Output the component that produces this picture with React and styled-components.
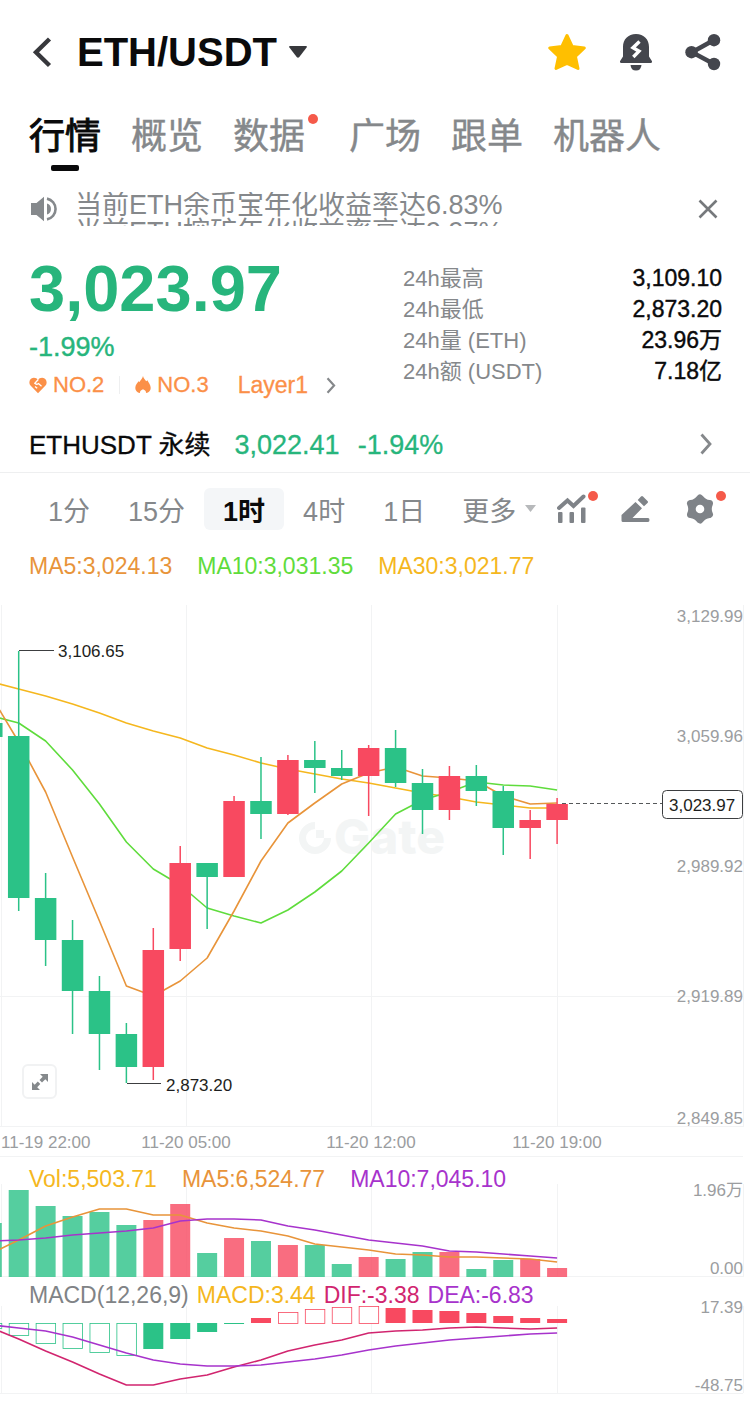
import React from "react";
import styled, { createGlobalStyle, css } from "styled-components";

const UP = "#2bc287";
const DOWN = "#f84960";
const ORANGE = "#e8943a";
const YELLOW = "#f5b71e";
const LIME = "#5fdc3c";
const PURPLE = "#a733cc";
const PINK = "#d1256f";

const tabs = [
  { name: "行情", active: true },
  { name: "概览" },
  { name: "数据", dot: true },
  { name: "广场" },
  { name: "跟单" },
  { name: "机器人" },
];

const stats = [
  ["24h最高", "3,109.10"],
  ["24h最低", "2,873.20"],
  ["24h量 (ETH)", "23.96万"],
  ["24h额 (USDT)", "7.18亿"],
];

const intervals = ["1分", "15分", "1时", "4时", "1日"];

// [rising, wick top, body top, body bottom, wick bottom]
const candles = [
  [0, 723, 723, 737, 737],
  [0, 651, 736, 898, 911],
  [0, 873, 898, 940, 966],
  [0, 920, 940, 991, 1034],
  [0, 976, 991, 1034, 1070],
  [0, 1023, 1034, 1067, 1083],
  [1, 928, 950, 1067, 1080],
  [1, 846, 863, 949, 961],
  [0, 863, 863, 877, 929],
  [1, 796, 801, 877, 877],
  [0, 757, 801, 814, 839],
  [1, 755, 760, 814, 815],
  [0, 741, 760, 768, 793],
  [0, 750, 768, 776, 780],
  [1, 745, 748, 776, 816],
  [0, 730, 748, 783, 787],
  [0, 769, 783, 810, 834],
  [1, 766, 776, 810, 820],
  [0, 765, 776, 791, 806],
  [0, 786, 791, 828, 855],
  [1, 810, 820, 828, 859],
  [1, 798, 804, 820, 844],
];

const ma30 = [682, 689, 696, 704, 713, 723, 731, 738, 748, 755, 763, 769, 774, 779, 783, 788, 793, 797, 802, 805, 808, 808];
const ma10 = [716, 723, 741, 770, 804, 842, 869, 885, 908, 916, 923, 910, 892, 871, 843, 814, 800, 792, 782, 785, 786, 790];
const ma5 = [697, 742, 792, 857, 921, 986, 996, 981, 958, 911, 861, 823, 803, 784, 773, 767, 776, 778, 781, 796, 804, 803];

const volumes = [1223, 1190, 1206, 1216, 1212, 1225, 1220, 1204, 1253, 1238, 1241, 1245, 1245, 1264, 1257, 1259, 1252, 1252, 1269, 1260, 1259, 1268];
const volMa5 = [1253, 1240, 1226, 1217, 1209, 1209, 1215, 1215, 1223, 1228, 1231, 1236, 1244, 1247, 1250, 1254, 1255, 1257, 1257, 1258, 1259, 1262];
const volMa10 = [1241, 1240, 1238, 1235, 1233, 1231, 1228, 1221, 1219, 1219, 1220, 1226, 1230, 1235, 1240, 1243, 1246, 1251, 1252, 1254, 1256, 1258];

// far end of every histogram bar, measured from the zero line
const ZERO = 1323;
const histogram = [1328, 1335, 1343, 1348, 1352, 1355, 1349, 1339, 1332, 1324, 1318, 1312, 1309, 1307, 1306, 1308, 1310, 1311, 1313, 1316, 1318, 1319];
const hollow = [0, 1, 2, 3, 4, 5, 11, 12, 13, 14];
const dif = [1328, 1339, 1351, 1362, 1374, 1385, 1385, 1379, 1375, 1367, 1360, 1351, 1345, 1340, 1333, 1331, 1330, 1328, 1327, 1328, 1329, 1328];
const dea = [1325, 1328, 1331, 1337, 1345, 1353, 1360, 1364, 1366, 1366, 1365, 1362, 1359, 1355, 1350, 1346, 1343, 1340, 1338, 1336, 1334, 1333];

const STEP = 26.92;
const xAt = (i) => 18.7 + (i - 1) * STEP;
const toPoints = (ys) => ys.map((y, i) => `${xAt(i)},${y}`).join(" ");
const gridX = [1, 186, 371, 557, 743];

const App = () => {
  return (
    <Page>
      <GlobalStyle />
      <Header />
      <Tabs>
        {tabs.map(({ name, active, dot }) => (
          <Tab key={name} $active={active} $dot={dot}>
            {name}
          </Tab>
        ))}
      </Tabs>
      <Notice />
      <Summary />
      <PerpetualLink href="#perpetual">
        <span>ETHUSDT 永续</span>
        <PerpetualPrice>3,022.41</PerpetualPrice>
        <PerpetualRate>-1.94%</PerpetualRate>
        <ChevronRight width="12" height="22" />
      </PerpetualLink>
      <Toolbar />
      <PriceChart />
      <VolumeChart />
      <MacdChart />
    </Page>
  );
};

export default App;

const Header = () => (
  <HeaderBar>
    <IconButton aria-label="返回">
      <svg width="20" height="32" viewBox="0 0 20 32" fill="none" stroke="#37383c" strokeWidth="4.4">
        <path d="M17.5 3 4 16.300 17.500 29.500" />
      </svg>
    </IconButton>
    <PairButton>
      <h1>ETH/USDT</h1>
      <svg width="18" height="12" viewBox="0 0 18 12" fill="#37383c">
        <path d="M1.200 0h15.600q2 0 .8 1.600L10.300 11q-1.300 1.500-2.600 0L.4 1.600Q-.8 0 1.200 0z" />
      </svg>
    </PairButton>
    <HeaderActions>
      <IconButton aria-label="收藏">
        <svg width="40" height="40" viewBox="0 0 40 40" fill="#ffbf00" stroke="#ffbf00" strokeWidth="3" strokeLinejoin="round">
          <path d="M20 3.500 25.100 14.400 37.300 16 28.400 24.300 31 36.500 20 31.500 9 36.500 11.600 24.300 2.700 16 14.900 14.400z" />
        </svg>
      </IconButton>
      <IconButton aria-label="预警">
        <svg width="34" height="38" viewBox="0 0 34 38" fill="#44464d">
          <path d="M17 1C9 1 4 6.500 4 14v9.500L1 28.200Q.4 30 2.300 30h29.400Q33.600 30 33 28.200L30 23.500V14C30 6.500 25 1 17 1z" />
          <path d="M11.500 32h11q-.5 5.500-5.500 5.500T11.500 32z" />
          <path d="M20.500 8.500 14 14.700 20 18.200 14.300 24" fill="none" stroke="#fff" strokeWidth="3.400" />
        </svg>
      </IconButton>
      <IconButton aria-label="分享">
        <svg width="36" height="38" viewBox="0 0 36 38" fill="#44464d">
          <path d="M29 7 7 19.300 29 31" fill="none" stroke="#44464d" strokeWidth="4.500" />
          <circle cx="6.500" cy="19.200" r="6.200" />
          <circle cx="29" cy="7.200" r="6.200" />
          <circle cx="29" cy="31" r="6.200" />
        </svg>
      </IconButton>
    </HeaderActions>
  </HeaderBar>
);

const Notice = () => (
  <NoticeBar>
    <svg width="28" height="26" viewBox="0 0 28 26" fill="#85898c">
      <path d="M0 7h5.500L13 .8v24.400L5.500 19H0z" />
      <path d="M16 7.500a5.800 5.800 0 0 1 0 11z" />
      <path d="M16 2.600a10.600 10.600 0 0 1 0 20.800" fill="none" stroke="#85898c" strokeWidth="2.600" />
    </svg>
    <NoticeList>
      <li>当前ETH余币宝年化收益率达6.83%</li>
      <li>当前ETH挖矿年化收益率高达9.97%</li>
    </NoticeList>
    <IconButton aria-label="关闭">
      <svg width="20" height="20" viewBox="0 0 20 20" fill="none" stroke="#76797c" strokeWidth="2.600">
        <path d="M1.500 1.500l17 17M18.500 1.500l-17 17" />
      </svg>
    </IconButton>
  </NoticeBar>
);

const Summary = () => (
  <SummarySection>
    <div>
      <Price>3,023.97</Price>
      <Rate>-1.99%</Rate>
      <Tags>
        <Tag href="#favourite">
          <svg width="18" height="17" viewBox="0 0 18 17" fill="#fb9048">
            <path d="M9 16.300 1.500 8.600C-.8 5.900.5 1 4.700.8 6.500.7 8 1.600 9 3c1-1.400 2.500-2.300 4.300-2.200 4.200.2 5.500 5.100 3.200 7.800z" />
            <path d="M9.300 2.500 5.800 6.300q1.500 1.700 3.700.2l3 2.800M6 9.500l2.200 1.800" fill="none" stroke="#fff" strokeWidth="1.300" />
          </svg>
          NO.2
        </Tag>
        <Divider />
        <Tag href="#hot">
          <svg width="16" height="18" viewBox="0 0 16 18" fill="#fb9048">
            <path d="M8 0c.4 2.300 2 3.600 3.200 5.300l1.200-1C13.500 6.500 15.700 9 15.700 12c0 2.500-1.700 4.700-4.700 5 .3-1.800-1-2.700-3-3.700-2 1-3.300 1.900-3 3.700-3-.3-4.700-2.500-4.700-5 0-3 2.200-5.500 3.300-6.700l1 .7C5.500 4 7.500 2.500 8 0z" />
          </svg>
          NO.3
        </Tag>
        <LayerTag href="#layer1">
          Layer1
          <ChevronRight width="10" height="17" />
        </LayerTag>
      </Tags>
    </div>
    <Stats>
      {stats.map(([label, value]) => (
        <Stat key={label}>
          <dt>{label}</dt>
          <dd>{value}</dd>
        </Stat>
      ))}
    </Stats>
  </SummarySection>
);

const ChevronRight = ({ width, height }) => (
  <svg width={width} height={height} viewBox="0 0 12 22" fill="none" stroke="#85888b" strokeWidth="2.800">
    <path d="M1.500 1.500 10 11 1.500 20.500" />
  </svg>
);

const Toolbar = () => (
  <ToolbarRow>
    {intervals.map((name) => (
      <IntervalButton key={name} $active={name === "1时"}>
        <span>{name}</span>
      </IntervalButton>
    ))}
    <MoreButton>
      <span>更多</span>
      <svg width="11" height="7" viewBox="0 0 11 7" fill="#b7b9bb">
        <path d="M0 0h11L5.500 7z" />
      </svg>
    </MoreButton>
    <Tools>
      <ToolButton aria-label="指标" $dot>
        <svg width="30" height="30" viewBox="0 0 30 30" fill="#7f8388">
          <path d="M2 14 10.500 6.500 16.500 12 26.500 2.500" fill="none" stroke="#7f8388" strokeWidth="4" strokeLinecap="round" />
          <rect x="1" y="18" width="4.500" height="11" rx="1" />
          <rect x="12.500" y="18" width="4.500" height="11" rx="1" />
          <rect x="24" y="13.500" width="4.500" height="15.500" rx="1" />
        </svg>
      </ToolButton>
      <ToolButton aria-label="画线">
        <svg width="30" height="30" viewBox="0 0 30 30" fill="#7f8388">
          <path d="M14.500 8 21 14.300 11.500 24H27q1.500 0 1.500 2t-1.500 2H2q-1.500 0-1.500-1.500V21zM16.700 6 20 2.500q1-1 2 0l4.500 4.500q1 1 0 2L23 12.300z" />
        </svg>
      </ToolButton>
      <ToolButton aria-label="设置" $dot>
        <svg width="30" height="30" viewBox="0 0 30 30" fill="#7f8388">
          <path
            d="M15 4Q18.500 9 24.500 9.500 22 15 24.500 20.500 18.500 21 15 26 11.500 21 5.500 20.500 8 15 5.500 9.500 11.500 9 15 4z"
            stroke="#7f8388"
            strokeWidth="7"
            strokeLinejoin="round"
          />
          <circle cx="15" cy="15" r="4.300" fill="#fff" />
        </svg>
      </ToolButton>
    </Tools>
  </ToolbarRow>
);

const PriceChart = () => (
  <Panel>
    <Legend $gap={25}>
      <LegendItem $color={ORANGE}>MA5:3,024.13</LegendItem>
      <LegendItem $color={LIME}>MA10:3,031.35</LegendItem>
      <LegendItem $color={YELLOW}>MA30:3,021.77</LegendItem>
    </Legend>
    <Chart viewBox="0 544 750 613">
      <Grid top={605} bottom={1127} lines={[996, 1126, 1156]} />
      <g fill="#f3f5f5">
        <circle cx="315" cy="838" r="12.500" fill="none" stroke="#f3f5f5" strokeWidth="7" />
        <path d="M315 820h18v18h-9l-9-9z" fill="#fff" />
        <path d="M316 830h8v8h-8z" />
        <Watermark x="334" y="854">
          Gate
        </Watermark>
      </g>
      <Line points={toPoints(ma30)} stroke={YELLOW} />
      <Line points={toPoints(ma10)} stroke={LIME} />
      <Line points={toPoints(ma5)} stroke={ORANGE} />
      {candles.map(([rising, high, top, bottom, low], i) => (
        <g key={i} fill={rising ? DOWN : UP}>
          <rect x={xAt(i) - 0.75} y={high} width="1.500" height={low - high} />
          <rect x={xAt(i) - 10.75} y={top} width="21.500" height={bottom - top} />
        </g>
      ))}
      <path d="M19 650.500h35M127 1083.500h34" stroke="#3c3e40" />
      <Mark x="58" y="657">
        3,106.65
      </Mark>
      <Mark x="166" y="1091">
        2,873.20
      </Mark>
      <path d="M562 803.500h100" stroke="#55585a" strokeDasharray="4 3" />
      <AxisText x="743" y="622">3,129.99</AxisText>
      <AxisText x="743" y="742">3,059.96</AxisText>
      <AxisText x="743" y="872">2,989.92</AxisText>
      <AxisText x="743" y="1002">2,919.89</AxisText>
      <AxisText x="743" y="1124">2,849.85</AxisText>
      <rect x="662.500" y="790.500" width="80" height="28" rx="4" fill="#fff" stroke="#3c3e40" />
      <Mark x="669" y="811">
        3,023.97
      </Mark>
      <TimeText x="1" y="1148" $start>
        11-19 22:00
      </TimeText>
      <TimeText x="186" y="1148">11-20 05:00</TimeText>
      <TimeText x="371" y="1148">11-20 12:00</TimeText>
      <TimeText x="557" y="1148">11-20 19:00</TimeText>
    </Chart>
    <ExpandButton aria-label="全屏">
      <svg width="18" height="18" viewBox="0 0 18 18" fill="#85898c">
        <path d="M9 1h8v8l-2.700-2.700-3.300 3.200L8.500 7l3.200-3.300zM1 9l2.700 2.700 3.100-3.200L9.300 11l-3.100 3.300L9 17H1z" />
      </svg>
    </ExpandButton>
  </Panel>
);

const VolumeChart = () => (
  <Panel>
    <Legend $gap={25}>
      <LegendItem $color={YELLOW}>Vol:5,503.71</LegendItem>
      <LegendItem $color={ORANGE}>MA5:6,524.77</LegendItem>
      <LegendItem $color={PURPLE}>MA10:7,045.10</LegendItem>
    </Legend>
    <Chart viewBox="0 1157 750 120">
      <Grid top={1184} bottom={1277} lines={[1276]} />
      {volumes.map((y, i) => (
        <rect key={i} x={xAt(i) - 10} y={y} width="20" height={1277 - y} fill={candles[i][0] ? DOWN : UP} opacity="0.800" />
      ))}
      <Line points={toPoints(volMa5)} stroke={ORANGE} />
      <Line points={toPoints(volMa10)} stroke={PURPLE} />
      <AxisText x="743" y="1196">1.96万</AxisText>
      <AxisText x="743" y="1274">0.00</AxisText>
    </Chart>
  </Panel>
);

const MacdChart = () => (
  <Panel>
    <Legend $gap={8} $compact>
      <LegendItem $color="#808386">MACD(12,26,9)</LegendItem>
      <LegendItem $color={YELLOW}>MACD:3.44</LegendItem>
      <LegendItem $color={PINK}>DIF:-3.38</LegendItem>
      <LegendItem $color={PURPLE}>DEA:-6.83</LegendItem>
    </Legend>
    <Chart viewBox="0 1277 750 117">
      <Grid top={1306} bottom={1393} lines={[1393]} />
      {histogram.map((y, i) => {
        const color = y > ZERO ? UP : DOWN;
        const isHollow = hollow.includes(i);
        const inset = isHollow ? 0.5 : 0;
        return (
          <rect
            key={i}
            x={xAt(i) - 10 + inset}
            y={Math.min(y, ZERO) + inset}
            width={20 - inset}
            height={Math.abs(y - ZERO)}
            fill={isHollow ? "#fff" : color}
            stroke={isHollow ? color : "none"}
            strokeWidth="0.800"
          />
        );
      })}
      <Line points={toPoints(dif)} stroke={PINK} />
      <Line points={toPoints(dea)} stroke={PURPLE} />
      <AxisText x="743" y="1313">17.39</AxisText>
      <AxisText x="743" y="1391">-48.75</AxisText>
    </Chart>
  </Panel>
);

const Grid = ({ top, bottom, lines }) => (
  <g stroke="#f2f3f4">
    {gridX.map((x) => (
      <line key={x} x1={x + 0.5} x2={x + 0.5} y1={top} y2={bottom} />
    ))}
    {lines.map((y) => (
      <line key={y} x1="0" x2="743" y1={y + 0.5} y2={y + 0.5} />
    ))}
  </g>
);

const GlobalStyle = createGlobalStyle`
  * {
    box-sizing: border-box;
  }

  body {
    margin: 0;
    background-color: #fff;
    color: #0a0a0b;
    font-family: "Liberation Sans", "Noto Sans CJK SC", sans-serif;
  }

  h1, p, ul, dl, dd {
    margin: 0;
    padding: 0;
  }

  button {
    padding: 0;
    border: 0;
    background: none;
    color: inherit;
    font-family: inherit;
    cursor: pointer;
  }

  a {
    color: inherit;
    text-decoration: none;
  }

  svg {
    display: block;
    flex-shrink: 0;
  }
`;

const dotStyle = css`
  &::before {
    content: "";
    position: absolute;
    width: 10px;
    height: 10px;
    border-radius: 50%;
    background-color: #f55a4a;
  }
`;

const Page = styled.main`
  width: 100%;
  padding-bottom: 8px;
  overflow: hidden;
`;

const HeaderBar = styled.header`
  display: flex;
  align-items: center;
  height: 104px;
  padding: 0 29px 0 32px;
`;

const IconButton = styled.button`
  display: flex;
`;

const PairButton = styled.button`
  display: flex;
  align-items: center;
  gap: 12px;
  margin-left: 25px;

  h1 {
    font-size: 40px;
    line-height: 48px;
  }
`;

const HeaderActions = styled.div`
  display: flex;
  align-items: center;
  gap: 32px;
  margin-left: auto;
`;

const Tabs = styled.nav`
  display: flex;
  gap: 30px;
  padding: 0 29px;
`;

const Tab = styled.button`
  position: relative;
  height: 68px;
  margin-right: ${({ $dot }) => ($dot ? "14px" : 0)};
  font-size: 36px;
  line-height: 64px;
  color: ${({ $active }) => ($active ? "#0a0a0b" : "#85888b")};
  -webkit-text-stroke: ${({ $active }) => ($active ? "1px" : "0.4px")};
  white-space: nowrap;

  &::after {
    content: "";
    display: block;
    width: 28px;
    height: 6px;
    margin: -4px auto 0;
    border-radius: 2px;
    background-color: ${({ $active }) => ($active ? "#0a0a0b" : "transparent")};
  }

  ${({ $dot }) => $dot && dotStyle}

  &::before {
    top: 10px;
    right: -13px;
  }
`;

const NoticeBar = styled.section`
  display: flex;
  align-items: center;
  height: 34px;
  margin-top: 20px;
  padding: 0 32px 0 31px;
`;

const NoticeList = styled.ul`
  flex: 1;
  height: 34px;
  margin-left: 16px;
  overflow: hidden;
  list-style: none;
  font-size: 27px;
  line-height: 27px;
  color: #85888b;
  white-space: nowrap;
`;

const SummarySection = styled.section`
  display: flex;
  justify-content: space-between;
  padding: 31px 28px 0 29px;
`;

const Price = styled.p`
  font-size: 65px;
  font-weight: bold;
  line-height: 64px;
  color: #27b57c;
`;

const Rate = styled.p`
  margin-top: 10px;
  font-size: 27px;
  line-height: 32px;
  color: #27b57c;
  -webkit-text-stroke: 0.4px;
`;

const Tags = styled.div`
  display: flex;
  align-items: center;
  margin-top: 8px;
  line-height: 28px;
`;

const Tag = styled.a`
  display: flex;
  align-items: center;
  gap: 6px;
  font-size: 22px;
  color: #fb9048;
  -webkit-text-stroke: 0.3px;
`;

const LayerTag = styled(Tag)`
  gap: 18px;
  margin-left: 29px;
  font-size: 23px;
`;

const Divider = styled.span`
  width: 1px;
  height: 18px;
  margin: 0 15px;
  background-color: #eeeff0;
`;

const Stats = styled.dl`
  width: 319px;
  padding-top: 6px;
`;

const Stat = styled.div`
  display: flex;
  justify-content: space-between;
  line-height: 31px;

  dt {
    font-size: 22px;
    color: #85888b;
  }

  dd {
    font-size: 23px;
    -webkit-text-stroke: 0.4px;
  }
`;

const PerpetualLink = styled.a`
  display: flex;
  align-items: baseline;
  height: 58px;
  margin-top: 16px;
  padding: 0 38px 0 29px;
  border-bottom: 1px solid #eeeff0;
  font-size: 26px;
  line-height: 60px;
  -webkit-text-stroke: 0.3px;

  svg {
    align-self: center;
    margin-left: auto;
  }
`;

const PerpetualPrice = styled.span`
  margin-left: 24px;
  font-size: 27px;
  color: #27b57c;
`;

const PerpetualRate = styled(PerpetualPrice)`
  margin-left: 18px;
`;

const ToolbarRow = styled.div`
  display: flex;
  align-items: center;
  height: 71px;
  padding: 0 35px 0 29px;
`;

const IntervalButton = styled.button`
  min-width: 80px;
  height: 42px;
  padding: 0 19px;
  border-radius: 6px;
  background-color: ${({ $active }) => ($active ? "#f4f6f8" : "transparent")};
  font-size: 27px;
  font-weight: ${({ $active }) => ($active ? "bold" : "normal")};
  color: ${({ $active }) => ($active ? "#0a0a0b" : "#85888b")};
  white-space: nowrap;

  span {
    display: block;
    height: 28px;
    overflow: hidden;
    line-height: 34px;
  }
`;

const MoreButton = styled(IntervalButton)`
  display: flex;
  align-items: center;
  gap: 9px;
  padding: 0 0 0 18px;
`;

const Tools = styled.div`
  display: flex;
  gap: 34px;
  margin-left: auto;
`;

const ToolButton = styled.button`
  position: relative;

  ${({ $dot }) => $dot && dotStyle}

  &::before {
    top: -3px;
    right: -11px;
  }
`;

const Panel = styled.section`
  position: relative;
  display: grid;

  > * {
    grid-area: 1 / 1;
  }
`;

const Legend = styled.div`
  display: flex;
  align-self: start;
  gap: ${({ $gap }) => $gap}px;
  padding: ${({ $compact }) => ($compact ? "4px" : "8px")} 29px 0;
  z-index: 1;
`;

const LegendItem = styled.span`
  font-size: 23px;
  line-height: 28px;
  color: ${({ $color }) => $color};
  white-space: nowrap;
`;

const Chart = styled.svg`
  width: 100%;
  height: auto;
`;

const Line = styled.polyline`
  fill: none;
  stroke-width: 1.6px;
  stroke-linejoin: round;
`;

const Mark = styled.text`
  font-size: 17px;
  fill: #1d1e20;
`;

const AxisText = styled.text`
  font-size: 17px;
  fill: #9b9da0;
  text-anchor: end;
`;

const TimeText = styled(AxisText)`
  text-anchor: ${({ $start }) => ($start ? "start" : "middle")};
`;

const Watermark = styled.text`
  font-family: Inter, sans-serif;
  font-size: 48px;
  font-weight: 800;
`;

const ExpandButton = styled.button`
  display: flex;
  align-items: center;
  justify-content: center;
  align-self: end;
  width: 35px;
  height: 35px;
  margin: 0 0 58px 22px;
  border: 2px solid #f1f2f3;
  border-radius: 6px;
  background-color: #fff;
`;
